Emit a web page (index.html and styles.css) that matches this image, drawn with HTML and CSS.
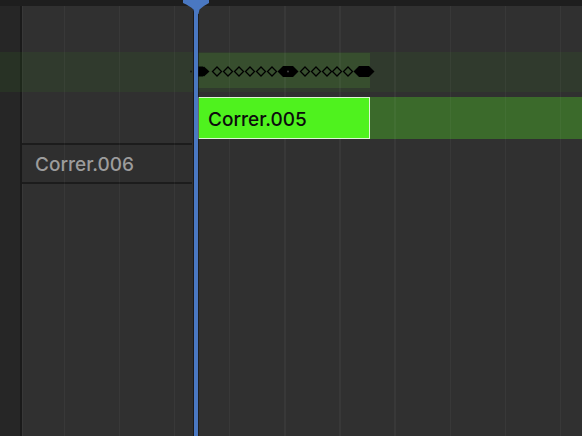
FILE: index.html
```html
<!DOCTYPE html>
<html lang="en">
<head>
<meta charset="utf-8">
<title>NLA Editor</title>
<link rel="stylesheet" href="styles.css">
</head>
<body>
<div class="editor">
  <div class="header"></div>
  <div class="gutter"></div>
  <div class="band"></div>
  <div class="band-action"></div>
  <div class="strip-tail"></div>
  <div class="track-row"><span class="track-name">Correr.006</span></div>

  <div class="grid">
    <i></i><i></i><i></i><i></i><i></i><i></i><i></i><i></i><i></i><i></i>
  </div>

  <svg class="keys" viewBox="0 0 200 24" width="200" height="24" aria-hidden="true">
    <circle cx="-1" cy="11.5" r="0.9" fill="#111"/>
    <!-- first held key -->
    <rect x="5" y="6.5" width="6" height="10" fill="#000"/>
    <polygon points="12,6.5 17.5,11.5 12,16.5 5,11.5" fill="#000"/>
    <!-- hollow keys -->
    <g class="hollow">
      <polygon points="25,7 29.5,11.5 25,16 20.5,11.5"/>
      <polygon points="36,7 40.5,11.5 36,16 31.5,11.5"/>
      <polygon points="47,7 51.5,11.5 47,16 42.5,11.5"/>
      <polygon points="58,7 62.5,11.5 58,16 53.5,11.5"/>
      <polygon points="69,7 73.5,11.5 69,16 64.5,11.5"/>
      <polygon points="80,7 84.5,11.5 80,16 75.5,11.5"/>
      <polygon points="113,7 117.5,11.5 113,16 108.5,11.5"/>
      <polygon points="124,7 128.5,11.5 124,16 119.5,11.5"/>
      <polygon points="135,7 139.5,11.5 135,16 130.5,11.5"/>
      <polygon points="145,7 149.5,11.5 145,16 140.5,11.5"/>
      <polygon points="156,7 160.5,11.5 156,16 151.5,11.5"/>
    </g>
    <!-- middle key -->
    <polygon points="91,6 101,6 106.5,11.5 101,17 91,17 85.5,11.5" fill="#000"/>
    <circle cx="96" cy="11.5" r="1" fill="#444"/>
    <!-- last key -->
    <polygon points="167,6 177,6 182.5,11.5 177,17 167,17 161.5,11.5" fill="#000"/>
  </svg>

  <div class="strip"><span class="strip-name">Correr.005</span></div>

  <div class="playhead">
    <svg class="playhead-head" viewBox="0 0 30 14" width="30" height="14" aria-hidden="true">
      <path d="M2,0 L28,0 L28,3 Q22,6 18.5,9.5 L17.5,14 L13.5,14 L12.5,9.5 Q9,6 2,3 Z" fill="#4a78c2"/>
    </svg>
  </div>
</div>
</body>
</html>
```

FILE: styles.css
```css
html, body {
  margin: 0;
  padding: 0;
  background: #303030;
}

.editor {
  position: relative;
  width: 582px;
  height: 436px;
  overflow: hidden;
  background: #303030;
  font-family: Inter, "DejaVu Sans", sans-serif;
  display: grid;
  grid-template-columns: 22px 170px 6px 172px 1fr;
  grid-template-rows: 6px 46px 40px 5px 42px 4px 41px 1fr;
}

.header {
  grid-row: 1;
  grid-column: 1 / -1;
  background: #1e1e1e;
}

.gutter {
  grid-row: 2 / -1;
  grid-column: 1;
  background: #262626;
  border-right: 2px solid #1a1a1a;
  box-shadow: 1px 0 0 #383838;
}

.band {
  grid-row: 3;
  grid-column: 1 / -1;
  background: rgba(48, 98, 33, 0.2);
}

.band-action {
  grid-row: 3;
  grid-column: 4;
  margin: 1px 0 4px;
  background: rgba(80, 150, 50, 0.22);
}

.strip-tail {
  grid-row: 5;
  grid-column: 4 / -1;
  background: #3b6a2b;
}

.track-row {
  grid-row: 7;
  grid-column: 2;
  border-top: 2px solid #1c1c1c;
  border-bottom: 2px solid #1c1c1c;
  background: #2f2f2f;
  display: flex;
  align-items: center;
  padding-left: 13px;
  padding-top: 1px;
}

.track-name {
  font-size: 19px;
  font-weight: 500;
  color: #9c9c9c;
  line-height: 1;
}

.grid {
  grid-row: 2 / -1;
  grid-column: 1 / -1;
  display: flex;
  gap: 53.67px;
  padding-left: 63.5px;
  pointer-events: none;
}

.grid i {
  display: block;
  width: 1.5px;
  background: rgba(255, 255, 255, 0.04);
}

.keys {
  grid-row: 3;
  grid-column: 3 / -1;
  align-self: start;
  margin-top: 8px;
  overflow: visible;
}

.hollow polygon {
  fill: none;
  stroke: #000;
  stroke-width: 1.3;
}

.strip {
  grid-row: 5;
  grid-column: 4;
  background: #4ff21e;
  border: 1px solid #e0f7d6;
  display: flex;
  align-items: center;
  padding-left: 9px;
  padding-top: 3px;
}

.strip-name {
  font-size: 19px;
  font-weight: 500;
  color: #0c0c0c;
  line-height: 1;
}

.playhead {
  position: absolute;
  left: 194px;
  top: 0;
  bottom: 0;
  width: 4px;
  background: #4a78c2;
  box-shadow: -1px 0 0 #1a1a1a, 1px 0 0 rgba(20, 20, 20, 0.6);
}

.playhead-head {
  position: absolute;
  left: -13.5px;
  top: 0;
  display: block;
}
```
